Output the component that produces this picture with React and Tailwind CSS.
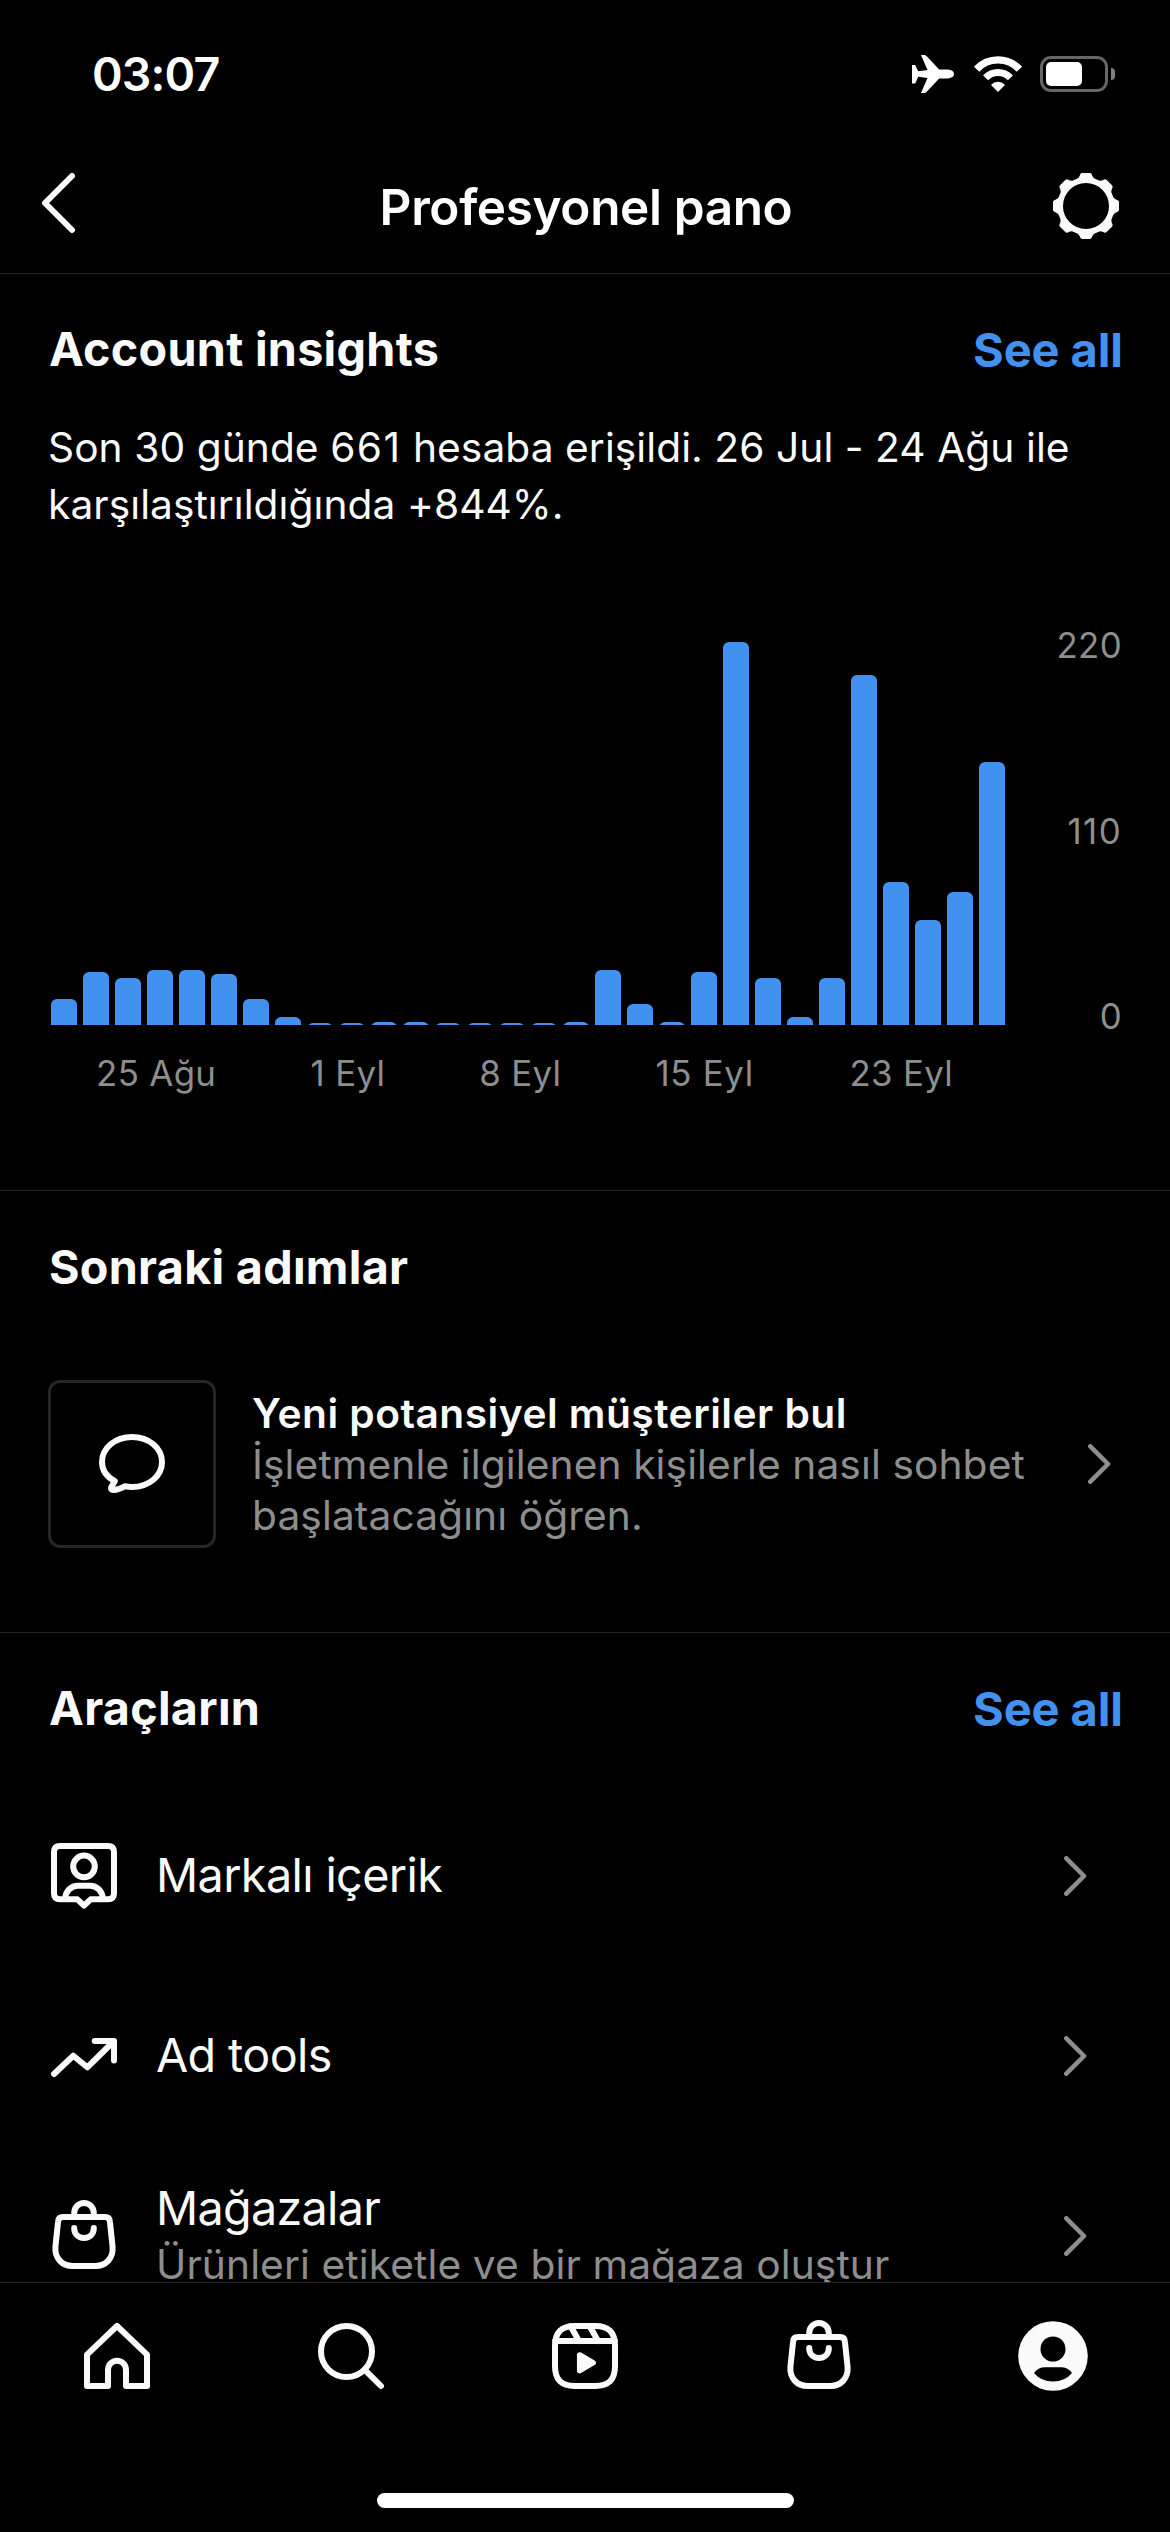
import React from "react";

// bar heights of the last 30 days, in px
const bars = [
  26, 53, 47, 55, 55, 51, 26, 8, 2, 2, 3, 3, 2, 2, 2, 2, 3, 55, 21, 3, 53, 383,
  47, 8, 47, 350, 143, 105, 133, 263,
];

const Airplane = () => (
  <svg width="42" height="38" viewBox="0 0 42 38" fill="#fff">
    <path d="M0 10H3.2L6.2 16.2L15.5 15L9 0H13L15 1.4L27.2 14.6H36Q42 15.3 42 19Q42 22.7 36 23.4H27.2L15 36.6L13 38H9L15.5 23L6.2 21.8L3.2 28.5H0Z" />
  </svg>
);

const Wifi = () => (
  <svg width="48" height="36" viewBox="0 0 48 36" fill="none" stroke="#fff">
    <path d="M2.6 13.2A29.2 29.2 0 0 1 45.4 13.2" strokeWidth="7.4" />
    <path d="M11.6 21.9A17 17 0 0 1 36.4 21.9" strokeWidth="6.9" />
    <path
      d="M24 36L17 29Q20 25.8 24 25.8T31 29Z"
      fill="#fff"
      stroke="none"
    />
  </svg>
);

const Battery = () => (
  <div className="flex items-center gap-[3px]">
    <div className="h-9 w-[68px] rounded-[11px] border-[3px] border-[#666] p-[3px]">
      <div className="h-6 w-9 rounded-[5px] bg-white" />
    </div>
    <div className="h-3 w-1 rounded-r-full bg-[#808080]" />
  </div>
);

const Gear = () => (
  <svg width="72" height="72" viewBox="-36 -35 72 72" fill="#fafafa">
    <circle r="25.8" fill="none" stroke="#fafafa" strokeWidth="5.6" />
    {[0, 45, 90, 135, 180, 225, 270, 315].map((deg) => (
      <path
        key={deg}
        transform={`rotate(${deg})`}
        d="M-10 -26.5Q-7.4 -27.6 -6.4 -30L-5.8 -31.6Q-5.2 -33 -3.8 -33H3.8Q5.2 -33 5.8 -31.6L6.4 -30Q7.4 -27.6 10 -26.5Z"
      />
    ))}
  </svg>
);

const Chevron = () => (
  <svg width="23" height="40" viewBox="0 0 23 40" className="shrink-0">
    <path
      d="M2.3 2.3L20 20L2.3 37.7"
      fill="none"
      stroke="#8e8e8e"
      strokeWidth="4.5"
      strokeLinecap="round"
      strokeLinejoin="round"
    />
  </svg>
);

// stroked icons on a 72px grid
const Icon = ({ children, viewBox = "0 0 72 72", ...props }) => (
  <svg
    width="72"
    height="72"
    viewBox={viewBox}
    fill="none"
    stroke="#fafafa"
    strokeWidth="6"
    strokeLinecap="round"
    strokeLinejoin="round"
    className="shrink-0"
    {...props}
  >
    {children}
  </svg>
);

const CommentIcon = () => (
  <Icon viewBox="16 8 72 72">
    <path d="M34.8 61.2L31.2 67.2Q30.4 70 33.2 70Q39 69.8 44.8 66.2Q48 67 52 67C69 67 82 56 82 42S69 17 52 17S22 28 22 42C22 50 27 57 34.8 61.2Z" />
  </Icon>
);

const BrandedIcon = () => (
  <Icon>
    <path d="M12 6H60Q66 6 66 12V53.3Q66 59.3 60 59.3H42.6L36 65.6L29.4 59.3H12Q6 59.3 6 53.3V12Q6 6 12 6Z" />
    <circle cx="36" cy="26.4" r="10.8" />
    <path d="M17.3 58C17.8 51 23 45.8 30 45.8H42C49 45.8 54.2 51 54.7 58" />
  </Icon>
);

const TrendIcon = () => (
  <Icon>
    <path d="M6 54L25.3 35.7L39.3 47.3L65 22M46.7 21H66V40.5" />
  </Icon>
);

const BagIcon = () => (
  <Icon>
    <path d="M15 17H57Q61.6 17 61.9 21.5L64.6 47C65.4 58 58 66 47.5 66H24.5C14 66 6.6 58 7.4 47L10.1 21.5Q10.4 17 15 17Z" />
    <path d="M26.2 17V13A9.8 10 0 0 1 45.8 13V17" />
    <path d="M26.2 28C26.2 34 30 38 36 38S45.8 34 45.8 28" />
  </Icon>
);

const HomeIcon = () => (
  <Icon viewBox="0 0 24 24" strokeWidth="2">
    <path d="M9.005 16.545a2.997 2.997 0 0 1 2.997-2.997A2.997 2.997 0 0 1 15 16.545V22h7V11.543L12 2 2 11.543V22h7.005Z" />
  </Icon>
);

const SearchIcon = () => (
  <Icon viewBox="0 0 24 24" strokeWidth="2">
    <circle cx="10.5" cy="10.5" r="8.5" />
    <path d="M16.511 16.511L22 22" />
  </Icon>
);

const ReelsIcon = () => (
  <Icon viewBox="0 0 24 24" strokeWidth="2">
    <path d="M2.049 7.002H21.95M13.504 2.001L16.362 7.002M7.207 2.11L10.002 7.002" />
    <path d="M2 12.001v3.449c0 2.849.698 4.006 1.606 4.945.94.908 2.098 1.607 4.946 1.607h6.896c2.848 0 4.006-.699 4.946-1.607.908-.939 1.606-2.096 1.606-4.945V8.552c0-2.848-.698-4.006-1.606-4.945C19.454 2.699 18.296 2 15.448 2H8.552c-2.848 0-4.006.699-4.946 1.607C2.698 4.546 2 5.704 2 8.552Z" />
    <path
      d="M9.763 17.664a.908.908 0 0 1-.454-.787V11.63a.909.909 0 0 1 1.364-.788l4.545 2.624a.909.909 0 0 1 0 1.575l-4.545 2.624a.91.91 0 0 1-.91 0Z"
      fill="#fafafa"
      stroke="none"
    />
  </Icon>
);

const ProfileIcon = () => (
  <Icon stroke="none">
    <circle cx="36" cy="36" r="34.8" fill="#fafafa" />
    <ellipse cx="36" cy="29" rx="12.5" ry="12.6" fill="#000" />
    <path
      d="M17 53Q21 47.2 28 47.2H44Q51 47.2 55 53Q48 61.5 36 61.5T17 53Z"
      fill="#000"
    />
  </Icon>
);

const SectionTitle = ({ title, link }) => (
  <div className="flex h-16 items-center justify-between pr-[47px] pl-[49px]">
    <h2 className="text-[46.7px] font-bold tracking-[0.006em]">{title}</h2>
    {link && (
      <a className="pt-0.5 text-[47px] font-bold tracking-[-0.002em] text-[#4291ee]">
        {link}
      </a>
    )}
  </div>
);

const InsightsChart = () => (
  <>
    <div className="mt-[91px] flex h-[413px] justify-between pr-12 pl-[51px]">
      <svg width="956" height="383" className="mt-[18px]">
        {bars.map((h, i) => (
          <rect
            key={i}
            x={i * 32}
            y={383 - h}
            width="26"
            height={h + 20}
            rx="6"
            fill="#4291ee"
          />
        ))}
      </svg>
      <div className="flex flex-col justify-between text-right text-[34.8px] leading-[42px] tracking-[0.01em] text-[#8e8e8e]">
        <span>220</span>
        <span className="tracking-[0.04em]">110</span>
        <span>0</span>
      </div>
    </div>
    <div className="mt-[15px] grid grid-cols-[192.4px_191.2px_153.4px_215.4px_177.8px] pl-[60px] text-center text-[34.8px] leading-[42px] tracking-[0.01em] text-[#8e8e8e]">
      <span>25 Ağu</span>
      <span>1 Eyl</span>
      <span>8 Eyl</span>
      <span className="tracking-[0.02em]">15 Eyl</span>
      <span>23 Eyl</span>
    </div>
  </>
);

const ToolRow = ({ icon, title, subtitle }) => (
  <div className="flex h-[180px] items-center pr-[83px] pl-12">
    {icon}
    <div className="ml-9 flex-1 whitespace-nowrap">
      <div
        className={
          subtitle
            ? "text-[46.7px] leading-[56px] tracking-[-0.015em]"
            : "pb-0.5 text-[46.7px] leading-[56px] tracking-[-0.013em]"
        }
      >
        {title}
      </div>
      {subtitle && (
        <div className="text-[40.7px] leading-[57px] tracking-[0.0027em] text-[#8e8e8e]">
          {subtitle}
        </div>
      )}
    </div>
    <Chevron />
  </div>
);

const App = () => {
  return (
    <div className="flex h-[2532px] w-[1170px] flex-col overflow-hidden bg-black font-['Inter','Noto_Sans',sans-serif] text-[#fafafa]">
      {/* Status bar */}
      <div className="flex h-[148px] shrink-0 items-center justify-between pr-[55px] pl-[92px] text-white">
        <span className="pt-0.5 text-[46.5px] font-semibold tracking-[-0.018em]">
          03:07
        </span>
        <div className="flex items-center">
          <Airplane />
          <div className="mr-[18px] ml-5">
            <Wifi />
          </div>
          <Battery />
        </div>
      </div>

      {/* Header */}
      <header className="flex h-[126px] shrink-0 items-center border-b border-[#262626] pr-12 pb-[7px] pl-9">
        <svg width="86" height="72" viewBox="36 171 86 72" fill="none">
          <path
            d="M72 176L45 203L72 230"
            stroke="#fafafa"
            strokeWidth="6"
            strokeLinecap="round"
            strokeLinejoin="round"
          />
        </svg>
        <h1 className="flex-1 text-center text-[49.5px] font-semibold tracking-[-0.0075em] text-white">
          Profesyonel pano
        </h1>
        <Gear />
      </header>

      <main className="min-h-0 flex-1 overflow-hidden">
        <section className="h-[917px] border-b border-[#262626] pt-[43px]">
          <SectionTitle title="Account insights" link="See all" />
          <p className="mt-[38px] pl-12 text-[40.7px] leading-[57px] tracking-[0.0015em] whitespace-nowrap">
            Son 30 günde <span className="tracking-[0.035em]">661</span> hesaba
            erişildi. 26 Jul - 24 Ağu ile
            <br />
            karşılaştırıldığında +844%.
          </p>
          <InsightsChart />
        </section>

        <section className="h-[442px] border-b border-[#262626] pt-11">
          <SectionTitle title="Sonraki adımlar" />
          <div className="mt-[81px] flex items-center pr-[59px] pl-12">
            <div className="flex size-[168px] items-center justify-center rounded-xl border-[3px] border-[#262626]">
              <CommentIcon />
            </div>
            <div className="ml-9 flex-1 text-[40.7px] leading-[51px] whitespace-nowrap">
              <div className="font-semibold tracking-[0.012em]">
                Yeni potansiyel müşteriler bul
              </div>
              <div className="tracking-[0.0025em] text-[#8e8e8e]">
                İşletmenle ilgilenen kişilerle nasıl sohbet
                <br />
                başlatacağını öğren.
              </div>
            </div>
            <Chevron />
          </div>
        </section>

        <section className="pt-[43px]">
          <SectionTitle title="Araçların" link="See all" />
          <div className="mt-[46px]">
            <ToolRow icon={<BrandedIcon />} title="Markalı içerik" />
            <ToolRow icon={<TrendIcon />} title="Ad tools" />
            <ToolRow
              icon={<BagIcon />}
              title="Mağazalar"
              subtitle="Ürünleri etiketle ve bir mağaza oluştur"
            />
          </div>
        </section>
      </main>

      {/* Tab bar */}
      <nav className="h-[250px] shrink-0 border-t border-[#262626] pt-[37px]">
        <div className="grid grid-cols-5 justify-items-center">
          <HomeIcon />
          <SearchIcon />
          <ReelsIcon />
          <BagIcon />
          <ProfileIcon />
        </div>
        <div className="mx-auto mt-[101px] h-[15px] w-[417px] rounded-full bg-white" />
      </nav>
    </div>
  );
};

export default App;
